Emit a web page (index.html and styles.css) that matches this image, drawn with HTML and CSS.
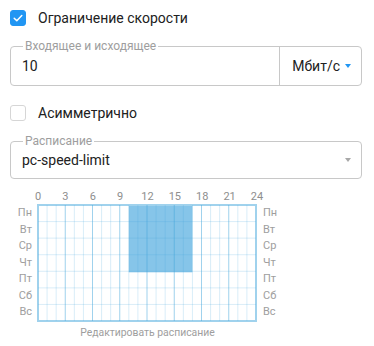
FILE: index.html
```html
<!DOCTYPE html>
<html lang="ru">
<head>
<meta charset="utf-8">
<link rel="stylesheet" href="styles.css">
</head>
<body>
<div class="panel">
  <label class="check-row">
    <span class="checkbox checked">
      <svg width="16" height="16" viewBox="0 0 16 16"><path d="M4.2 8.2 L6.8 10.8 L11.8 5.6" fill="none" stroke="#fff" stroke-width="1.5" stroke-linecap="round" stroke-linejoin="round"/></svg>
    </span>
    <span class="check-label">Ограничение скорости</span>
  </label>

  <div class="field field-speed">
    <span class="field-label">Входящее и исходящее</span>
    <div class="field-input">10</div>
    <div class="field-unit">
      <span>Мбит/с</span>
      <svg class="caret" width="6" height="4" viewBox="0 0 6 4"><path d="M0 0 H6 L3 4 Z" fill="#2196f3"/></svg>
    </div>
  </div>

  <label class="check-row check-row-2">
    <span class="checkbox"></span>
    <span class="check-label">Асимметрично</span>
  </label>

  <div class="field field-schedule">
    <span class="field-label">Расписание</span>
    <div class="field-input">pc-speed-limit</div>
    <svg class="caret caret-gray" width="6" height="4" viewBox="0 0 6 4"><path d="M0 0 H6 L3 4 Z" fill="#a8a8a8"/></svg>
  </div>

  <div class="schedule">
    <div class="hours">
      <span>0</span><span>3</span><span>6</span><span>9</span><span>12</span><span>15</span><span>18</span><span>21</span><span>24</span>
    </div>
    <div class="days days-left">
      <span>Пн</span><span>Вт</span><span>Ср</span><span>Чт</span><span>Пт</span><span>Сб</span><span>Вс</span>
    </div>
    <svg class="chart" width="221" height="119" viewBox="0 0 221 119">
      <rect x="91.8" y="2" width="63.6" height="66.3" fill="rgba(65,165,220,0.64)"/>
      <g stroke="rgba(65,165,220,0.2)" stroke-width="1">
        <line x1="10.08" y1="1" x2="10.08" y2="117"/>
        <line x1="19.17" y1="1" x2="19.17" y2="117"/>
        <line x1="37.33" y1="1" x2="37.33" y2="117"/>
        <line x1="46.42" y1="1" x2="46.42" y2="117"/>
        <line x1="64.58" y1="1" x2="64.58" y2="117"/>
        <line x1="73.67" y1="1" x2="73.67" y2="117"/>
        <line x1="91.83" y1="1" x2="91.83" y2="117"/>
        <line x1="100.92" y1="1" x2="100.92" y2="117"/>
        <line x1="119.08" y1="1" x2="119.08" y2="117"/>
        <line x1="128.17" y1="1" x2="128.17" y2="117"/>
        <line x1="146.33" y1="1" x2="146.33" y2="117"/>
        <line x1="155.42" y1="1" x2="155.42" y2="117"/>
        <line x1="173.58" y1="1" x2="173.58" y2="117"/>
        <line x1="182.67" y1="1" x2="182.67" y2="117"/>
        <line x1="200.83" y1="1" x2="200.83" y2="117"/>
        <line x1="209.92" y1="1" x2="209.92" y2="117"/>
        <line x1="1" y1="17.57" x2="219" y2="17.57"/>
        <line x1="1" y1="34.14" x2="219" y2="34.14"/>
        <line x1="1" y1="50.71" x2="219" y2="50.71"/>
        <line x1="1" y1="67.29" x2="219" y2="67.29"/>
        <line x1="1" y1="83.86" x2="219" y2="83.86"/>
        <line x1="1" y1="100.43" x2="219" y2="100.43"/>
      </g>
      <g stroke="rgba(65,165,220,0.5)" stroke-width="1">
        <line x1="28.25" y1="1" x2="28.25" y2="117"/>
        <line x1="55.5" y1="1" x2="55.5" y2="117"/>
        <line x1="82.75" y1="1" x2="82.75" y2="117"/>
        <line x1="110" y1="1" x2="110" y2="117"/>
        <line x1="137.25" y1="1" x2="137.25" y2="117"/>
        <line x1="164.5" y1="1" x2="164.5" y2="117"/>
        <line x1="191.75" y1="1" x2="191.75" y2="117"/>
      </g>
      <rect x="1" y="1" width="218" height="116" fill="none" stroke="rgba(65,165,220,0.5)" stroke-width="2"/>
    </svg>
    <div class="days days-right">
      <span>Пн</span><span>Вт</span><span>Ср</span><span>Чт</span><span>Пт</span><span>Сб</span><span>Вс</span>
    </div>
    <div class="edit-link">Редактировать расписание</div>
  </div>
</div>
</body>
</html>
```

FILE: styles.css
```css
html, body {
  margin: 0;
  padding: 0;
  background: #fff;
}

body {
  font-family: Roboto, "Noto Sans", sans-serif;
  color: #212121;
}

.panel {
  padding: 0 12px 0 10px;
  width: 352px;
}

.check-row {
  display: flex;
  align-items: center;
  gap: 12px;
  height: 36px;
}

.check-row-2 {
  margin-top: 9px;
}

.checkbox {
  box-sizing: border-box;
  width: 16px;
  height: 16px;
  border-radius: 3px;
  border: 1px solid #d6d6d6;
  background: #fff;
  display: block;
  flex: none;
}

.checkbox.checked {
  background: #2196f3;
  border-color: #2196f3;
}

.checkbox svg {
  display: block;
  margin: -1px;
}

.check-label {
  font-size: 14px;
  line-height: 20px;
}

.field {
  position: relative;
  box-sizing: border-box;
  display: flex;
  align-items: center;
  border: 1px solid #c8c8c8;
  border-radius: 4px;
  margin-top: 10px;
}

.field-speed {
  height: 40px;
  align-items: stretch;
}

.field-schedule {
  height: 38px;
  padding-right: 10px;
}

.field-label {
  position: absolute;
  top: -8px;
  left: 12px;
  padding: 0 2px;
  background: #fff;
  font-size: 12px;
  line-height: 14px;
  color: #9e9e9e;
}

.field-input {
  flex: 1;
  display: flex;
  align-items: center;
  padding-left: 11px;
  font-size: 14px;
}

.field-unit {
  display: flex;
  align-items: center;
  gap: 5px;
  border-left: 1px solid #c8c8c8;
  padding: 0 10px 0 12px;
  font-size: 14px;
}

.caret {
  display: block;
  flex: none;
}

.schedule {
  display: grid;
  grid-template-columns: 22px 221px auto;
  column-gap: 5px;
  margin-top: 11px;
}

.hours {
  grid-column: 2;
  display: flex;
  margin: 0 -12.6px 0 -12.6px;
  height: 14px;
  font-size: 11px;
  line-height: 14px;
  color: #8e8e8e;
}

.hours span {
  flex: 1;
  text-align: center;
}

.days {
  display: flex;
  flex-direction: column;
  padding-top: 1px;
  font-size: 11px;
  color: #9e9e9e;
}

.days span {
  height: 16.57px;
  line-height: 16.57px;
}

.days-left {
  grid-column: 1;
  text-align: right;
}

.days-right {
  grid-column: 3;
  text-align: left;
}

.chart {
  grid-column: 2;
  display: block;
}

.edit-link {
  grid-column: 1 / 4;
  margin-top: 3px;
  padding-left: 27px;
  width: 221px;
  text-align: center;
  font-size: 10.4px;
  line-height: 14px;
  color: #9e9e9e;
}
```
